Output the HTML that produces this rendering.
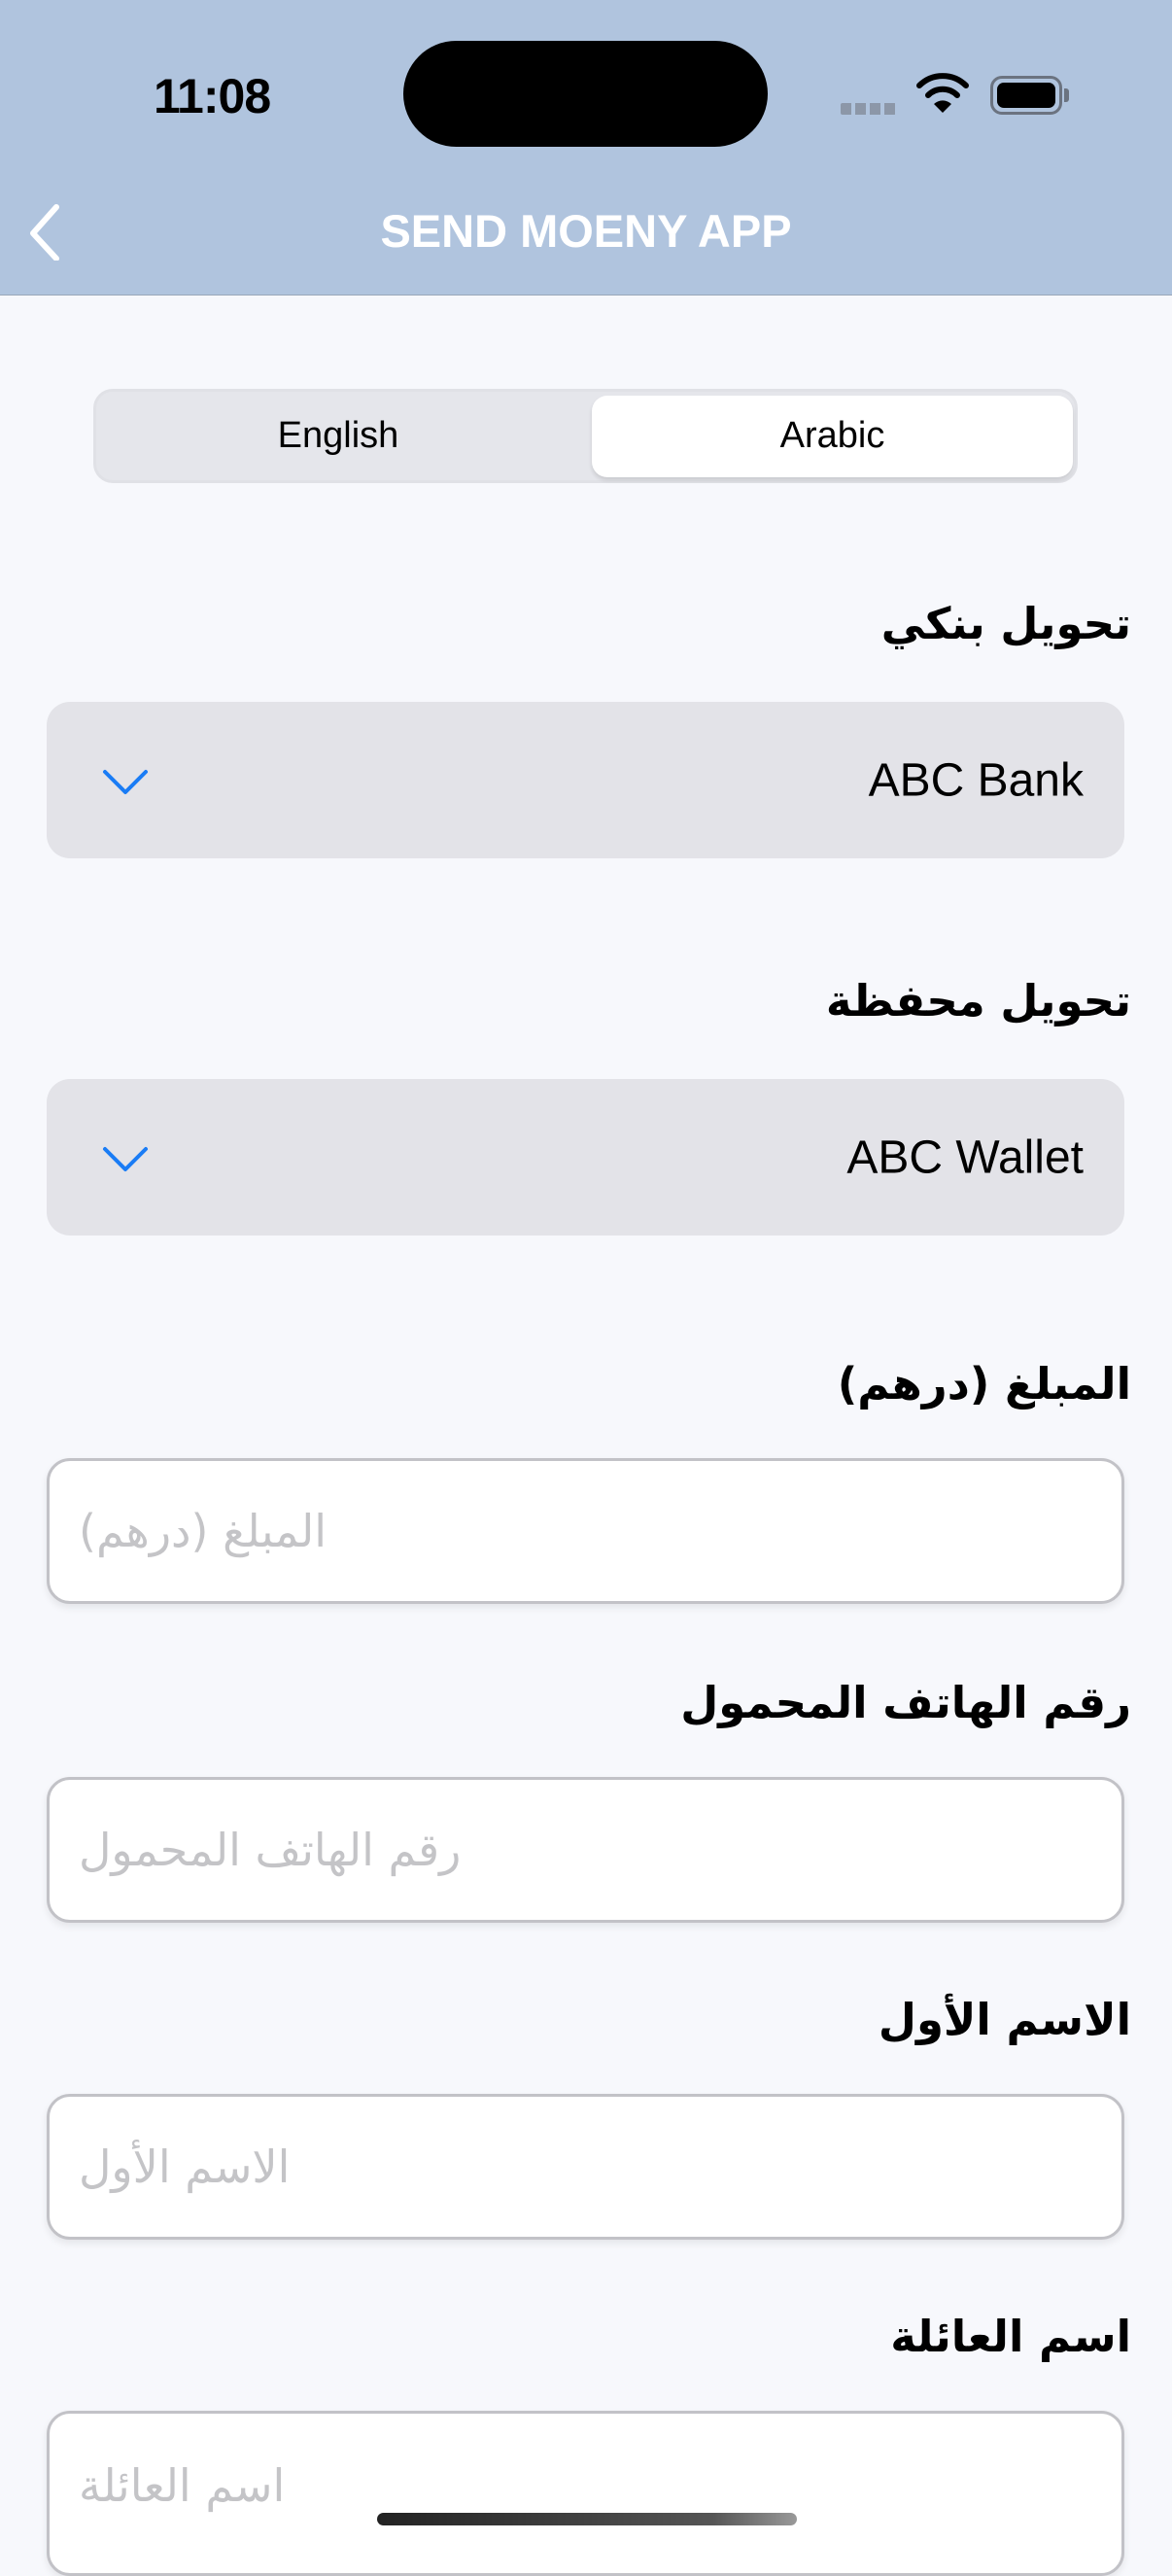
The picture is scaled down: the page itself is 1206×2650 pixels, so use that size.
<!DOCTYPE html>
<html><head><meta charset="utf-8"><style>
*{margin:0;padding:0;box-sizing:border-box}
body{width:1206px;height:2622px;background:#f7f8fc;position:relative;overflow:hidden;font-family:"Liberation Sans","Noto Sans CJK SC",sans-serif;color:#000}
.hdr{position:absolute;left:0;top:0;width:1206px;height:304px;background:#b0c4de;border-bottom:1px solid #9aa8b8}
.abs{position:absolute}
.lbl{position:absolute;right:42px;font-size:45px;font-weight:bold;direction:rtl;font-family:"DejaVu Sans",sans-serif;line-height:60px}
.dd{position:absolute;left:48px;width:1109px;height:161px;background:#e3e3e8;border-radius:24px}
.dd .t{position:absolute;right:42px;top:50%;transform:translateY(-50%);font-size:48px}
.dd svg{position:absolute;left:56px;top:66px}
.in{position:absolute;left:48px;width:1109px;height:150px;background:#fff;border:3px solid #c2c2c7;border-radius:24px;box-shadow:0 4px 8px rgba(0,0,0,.08)}
.in span{position:absolute;left:30px;top:50%;transform:translateY(-50%);font-size:46px;color:#c4c4c7;font-family:"DejaVu Sans",sans-serif;direction:rtl}
</style></head><body>
<div class="hdr"></div>
<div class="abs" style="left:158px;top:70px;font-size:50px;font-weight:bold;letter-spacing:-1px">11:08</div>
<div class="abs" style="left:415px;top:42px;width:375px;height:109px;background:#000;border-radius:55px"></div>
<div class="abs" style="left:865px;top:106px;width:57px;height:12px;background:repeating-linear-gradient(90deg,#8c97a8 0 11px,transparent 11px 15px);border-radius:2px"></div>
<svg class="abs" style="left:943px;top:74px" width="54" height="44" viewBox="0 0 54 44"><path d="M3 14 A34 34 0 0 1 51 14" fill="none" stroke="#000" stroke-width="6" stroke-linecap="round"/><path d="M12 24 A21 21 0 0 1 42 24" fill="none" stroke="#000" stroke-width="6" stroke-linecap="round"/><path d="M27 42 L18 33 A13 13 0 0 1 36 33 Z" fill="#000"/></svg>
<div class="abs" style="left:1019px;top:78px;width:74px;height:40px;border:3px solid #6b7380;border-radius:12px;padding:4px"><div style="width:100%;height:100%;background:#000;border-radius:7px"></div></div>
<div class="abs" style="left:1095px;top:91px;width:5px;height:14px;background:#6b7380;border-radius:0 3px 3px 0"></div>
<svg class="abs" style="left:26px;top:208px" width="40" height="60" viewBox="0 0 40 60"><path d="M32 5 L8 32 L32 58" fill="none" stroke="#fff" stroke-width="6" stroke-linecap="round" stroke-linejoin="round"/></svg>
<div class="abs" style="left:0;width:1206px;top:210px;text-align:center;color:#fff;font-size:47px;font-weight:bold">SEND MOENY APP</div>
<div class="abs" style="left:96px;top:400px;width:1013px;height:97px;background:#e5e6eb;border-radius:20px;border:3px solid #e0e1e6"></div>
<div class="abs" style="left:609px;top:407px;width:495px;height:84px;background:#fff;border-radius:16px;box-shadow:0 3px 4px rgba(0,0,0,.12)"></div>
<div class="abs" style="left:96px;width:504px;top:427px;text-align:center;font-size:38px">English</div>
<div class="abs" style="left:609px;width:495px;top:427px;text-align:center;font-size:38px;font-weight:500">Arabic</div>
<div class="lbl" style="top:612px">تحويل بنكي</div>
<div class="dd" style="top:722px"><svg width="50" height="30" viewBox="0 0 50 30"><path d="M4 6 L25 27 L46 6" fill="none" stroke="#1a7cf5" stroke-width="4" stroke-linecap="round" stroke-linejoin="round"/></svg><div class="t">ABC Bank</div></div>
<div class="lbl" style="top:1000px">تحويل محفظة</div>
<div class="dd" style="top:1110px"><svg width="50" height="30" viewBox="0 0 50 30"><path d="M4 6 L25 27 L46 6" fill="none" stroke="#1a7cf5" stroke-width="4" stroke-linecap="round" stroke-linejoin="round"/></svg><div class="t">ABC Wallet</div></div>
<div class="lbl" style="top:1394px">المبلغ (درهم)</div>
<div class="in" style="top:1500px"><span>المبلغ (درهم)</span></div>
<div class="lbl" style="top:1722px">رقم الهاتف المحمول</div>
<div class="in" style="top:1828px"><span>رقم الهاتف المحمول</span></div>
<div class="lbl" style="top:2048px">الاسم الأول</div>
<div class="in" style="top:2154px"><span>الاسم الأول</span></div>
<div class="lbl" style="top:2374px">اسم العائلة</div>
<div class="in" style="top:2480px;height:170px"><span style="top:74px">اسم العائلة</span></div>
<div class="abs" style="left:388px;top:2585px;width:432px;height:13px;background:linear-gradient(90deg,#222,#555 80%,#999);border-radius:7px"></div>
</body></html>
